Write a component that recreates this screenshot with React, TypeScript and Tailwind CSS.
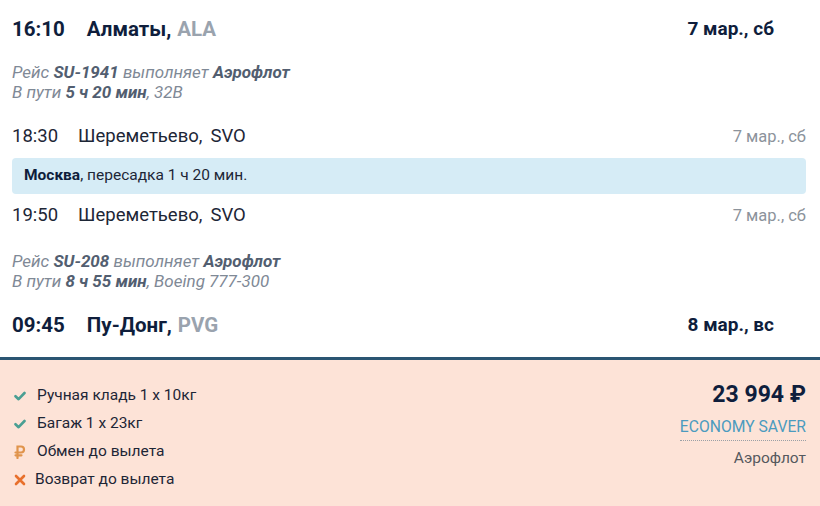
import React from "react";

const font = { fontFamily: "Roboto, 'Noto Sans', sans-serif" };

function Check() {
  return (
    <svg width="12" height="12" viewBox="0 0 12 12" className="shrink-0">
      <path d="M1.5 6.2 L4.6 9.2 L10.5 3" fill="none" stroke="#4a9f93" strokeWidth="2.6" strokeLinecap="round" strokeLinejoin="round" />
    </svg>
  );
}

function Ruble() {
  return (
    <svg width="12" height="14" viewBox="0 0 12 14" className="shrink-0">
      <path d="M3.5 13 V1.5 H7 a3 3 0 0 1 0 6 H1.5 M1.5 10.3 H7.5" fill="none" stroke="#e0944c" strokeWidth="2.2" strokeLinecap="round" />
    </svg>
  );
}

function Cross() {
  return (
    <svg width="12" height="12" viewBox="0 0 12 12" className="shrink-0">
      <path d="M2 2 L10 10 M10 2 L2 10" fill="none" stroke="#e8702c" strokeWidth="2.6" strokeLinecap="round" />
    </svg>
  );
}

type RowProps = { time: string; city: string; code: string; date: string; className: string };

function MainRow({ time, city, code, date, className }: RowProps) {
  return (
    <div className={`flex items-center justify-between pr-[32px] ${className}`}>
      <div className="flex items-center text-[20.5px] font-bold text-[#0f1e3c]">
        <span>{time}</span>
        <span className="ml-[22px]">{city},</span>
        <span className="ml-[6px] text-[#9aa3ae]">{code}</span>
      </div>
      <span className="text-[19px] font-bold text-[#0f1e3c]">{date}</span>
    </div>
  );
}

function StopRow({ time, city, code, date, className }: RowProps) {
  return (
    <div className={`flex items-center justify-between ${className}`}>
      <div className="flex items-center text-[18.5px] text-[#1d2636]">
        <span>{time}</span>
        <span className="ml-[20px]">{city},</span>
        <span className="ml-[8px]">{code}</span>
      </div>
      <span className="text-[16.5px] text-[#8c939b]">{date}</span>
    </div>
  );
}

function Meta({ flight, duration, plane, className }: { flight: string; duration: string; plane: string; className: string }) {
  return (
    <div className={`text-[17px] italic leading-[20px] text-[#7f8996] ${className}`}>
      <div>
        Рейс <b className="text-[#525e70]">{flight}</b> выполняет <b className="text-[#525e70]">Аэрофлот</b>
      </div>
      <div>
        В пути <b className="text-[#525e70]">{duration}</b>, {plane}
      </div>
    </div>
  );
}

export default function App() {
  const perks = [
    { icon: <Check />, text: "Ручная кладь 1 х 10кг", ml: "ml-[11px]" },
    { icon: <Check />, text: "Багаж 1 х 23кг", ml: "ml-[11px]" },
    { icon: <Ruble />, text: "Обмен до вылета", ml: "ml-[11px]" },
    { icon: <Cross />, text: "Возврат до вылета", ml: "ml-[9px]" },
  ];

  return (
    <div className="w-[820px] h-[506px] bg-white overflow-hidden flex flex-col" style={font}>
      <div className="pl-3 pr-[14px]">
        <MainRow time="16:10" city="Алматы" code="ALA" date="7 мар., сб" className="h-[58px]" />
        <Meta flight="SU-1941" duration="5 ч 20 мин" plane="32B" className="mt-[4px]" />
        <StopRow time="18:30" city="Шереметьево" code="SVO" date="7 мар., сб" className="mt-[16px] h-[38px]" />
        <div className="mt-[2px] h-[36px] rounded-[4px] bg-[#d6ecf6] flex items-center px-3 text-[15.5px] text-[#1d2636]">
          <b className="text-[#0f1e3c]">Москва</b>, пересадка 1 ч 20 мин.
        </div>
        <StopRow time="19:50" city="Шереметьево" code="SVO" date="7 мар., сб" className="h-[44px]" />
        <Meta flight="SU-208" duration="8 ч 55 мин" plane="Boeing 777-300" className="mt-[13px]" />
        <MainRow time="09:45" city="Пу-Донг" code="PVG" date="8 мар., вс" className="mt-[14px] h-[40px]" />
      </div>
      <div className="mt-[12px] flex-1 border-t-[3px] border-[#2a5572] bg-[#fde3d7] flex justify-between pl-[14px] pr-[14px]">
        <div className="pt-[22px] flex flex-col">
          {perks.map((p) => (
            <div key={p.text} className="h-[28px] flex items-center text-[15.5px] text-[#1d2636]">
              {p.icon}
              <span className={p.ml}>{p.text}</span>
            </div>
          ))}
        </div>
        <div className="pt-[20px] flex flex-col items-end">
          <div className="h-[30px] flex items-center text-[23px] font-bold text-[#0f1e3c]">23 994 ₽</div>
          <div className="mt-[4px] h-[27px] flex items-center text-[15.7px] text-[#4b9bbf] border-b-[1.5px] border-dotted border-[#9aa0a6]">
            ECONOMY SAVER
          </div>
          <div className="mt-[4px] h-[28px] flex items-center text-[15.5px] text-[#55595e]">Аэрофлот</div>
        </div>
      </div>
    </div>
  );
}
